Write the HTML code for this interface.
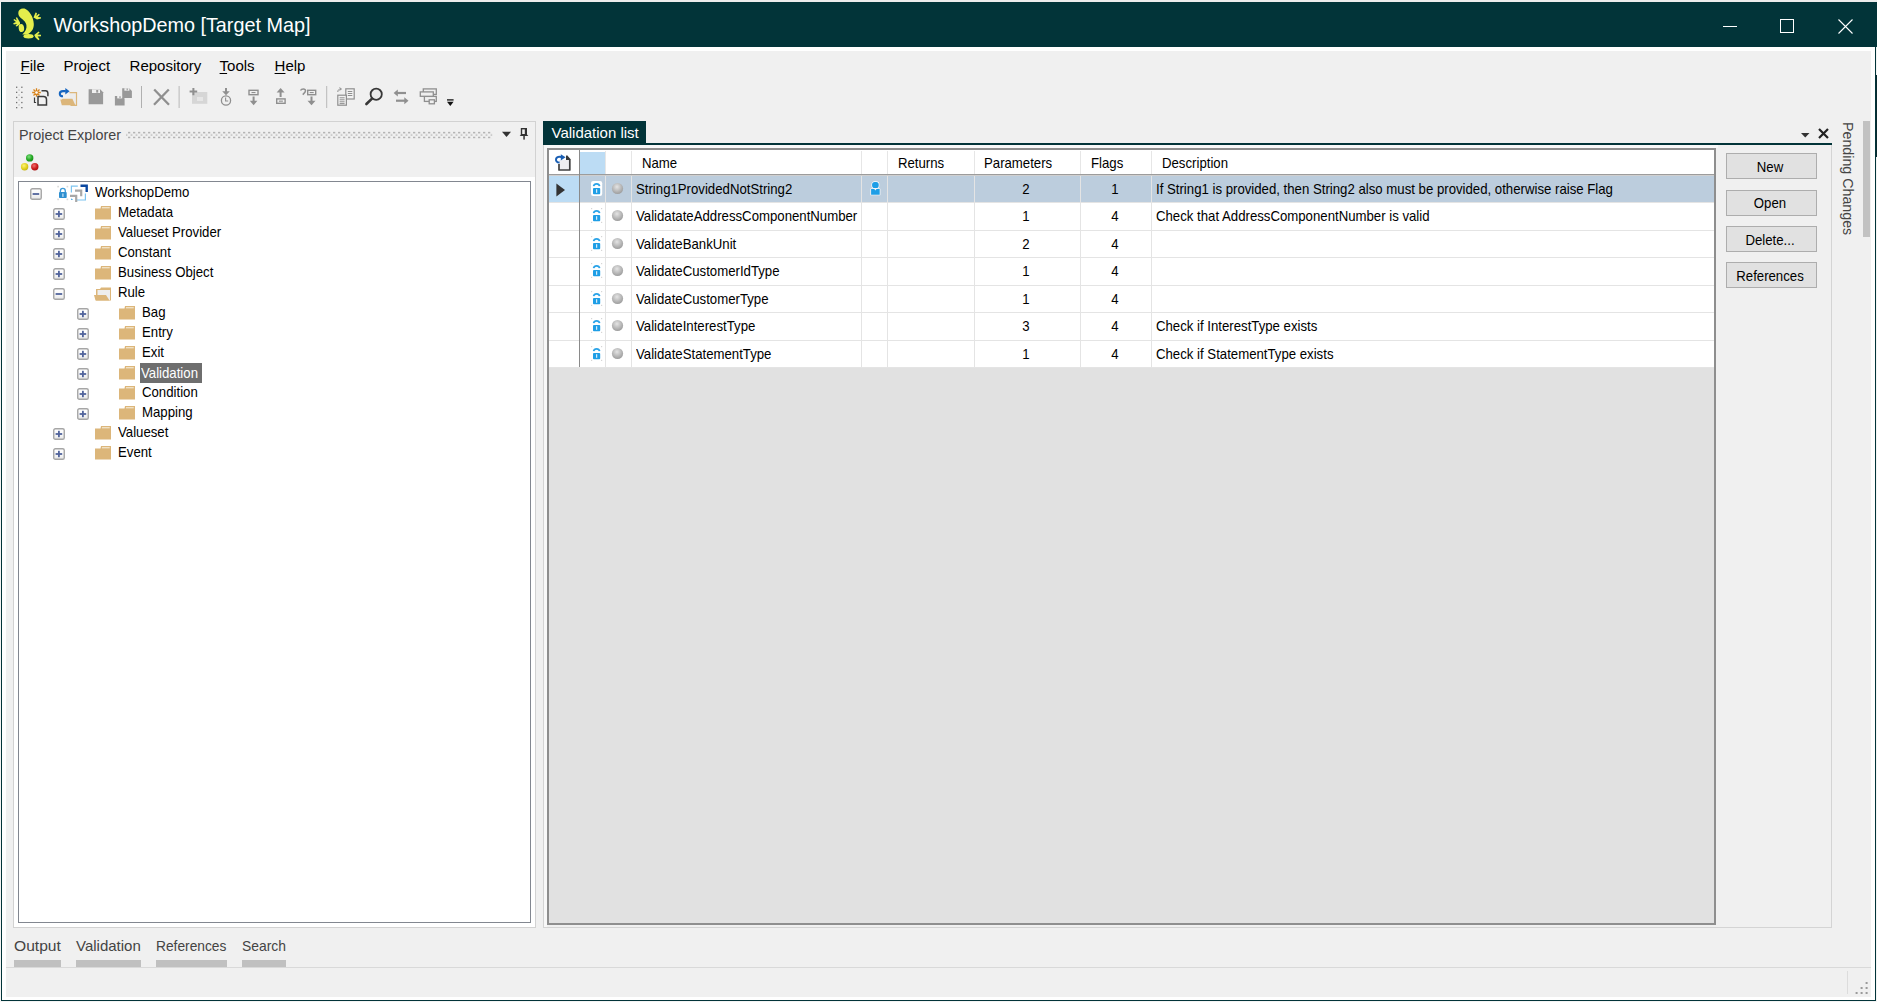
<!DOCTYPE html>
<html><head><meta charset="utf-8">
<style>
*{margin:0;padding:0;box-sizing:border-box}
html,body{width:1877px;height:1002px;overflow:hidden;background:#f4f4f4}
body{position:relative;font-family:"Liberation Sans",sans-serif}
.a{position:absolute}
.t{position:absolute;white-space:nowrap;line-height:1}
.u{text-decoration:underline;text-underline-offset:2px;text-decoration-thickness:1px}
.btn{position:absolute;left:1726px;width:91px;height:26px;background:#e1e1e1;border:1px solid #adadad;font-size:13px;text-align:center;line-height:24px;color:#000}
svg{position:absolute;overflow:visible}
</style></head><body>

<svg width="0" height="0" style="position:absolute"><defs><linearGradient id="pbg" x1="0" y1="0" x2="0" y2="1"><stop offset="0" stop-color="#ffffff"/><stop offset="0.5" stop-color="#f8f8f8"/><stop offset="1" stop-color="#e6e6e6"/></linearGradient></defs></svg>
<div class="a" style="left:0px;top:0px;width:1877px;height:2px;background:#ececec;"></div>
<div class="a" style="left:1px;top:2px;width:1875px;height:999px;background:#023439;"></div>
<div class="a" style="left:1876px;top:2px;width:1px;height:45px;background:#023439;"></div>
<div class="a" style="left:1876px;top:75px;width:1px;height:82px;background:#0a2a30;"></div>
<div class="a" style="left:2px;top:47px;width:1873px;height:953px;background:#ffffff;"></div>
<div class="a" style="left:6px;top:51px;width:1865px;height:946px;background:#f0f0f0;"></div>
<svg style="left:0;top:0" width="60" height="47" viewBox="0 0 60 47">
<g fill="#e4ee4c">
<path d="M18.3 13 C18.3 9.3 21.5 7.8 24.5 8.6 C29.5 10.3 33.6 17.5 33.8 24 C34 29 31.2 33 26.5 34.6 L22.3 34.6 C25.5 31.5 27 28.5 26.4 25 C25.8 21.3 22.5 19.5 20.3 17.4 C19 16.2 18.3 14.7 18.3 13 Z"/>
<ellipse cx="21.4" cy="28" rx="2.7" ry="4.1" transform="rotate(-8 21.4 28)"/>
<ellipse cx="28.5" cy="36.3" rx="5" ry="2.2"/>
<path d="M33.5 17.5 L35.5 12.5 L37 13 L36.3 16 L38.8 13.8 L39.8 14.8 L37.8 17 L41 17.2 L41 18.6 L37 19.6 Z"/>
<path d="M20 22.5 L17 17.2 L15.8 17.8 L16.8 20.5 L14.2 19 L13.4 20 L16 22 L13.2 23.2 L13.8 24.4 L17 24 L15.5 26 L16.8 26.6 L20 24.2 Z"/>
<path d="M34.2 35 L38.6 31.6 L39.6 32.6 L37.4 34.6 L41 34.8 L41 36.2 L37.6 36.4 L39.6 39.2 L38.4 40.2 L35.5 37.5 Z"/>
</g></svg>
<div class="t" style="left:53.5px;top:15.84px;font-size:19.8px;color:#ffffff;">WorkshopDemo [Target Map]</div>
<div class="a" style="left:1723px;top:26px;width:14px;height:1px;background:#ffffff;"></div>
<div class="a" style="left:1780px;top:19px;width:14px;height:14px;background:transparent;border:1px solid #ffffff"></div>
<svg style="left:1838px;top:19px" width="15" height="15" viewBox="0 0 15 15"><path d="M0.5 0.5 L14.5 14.5 M14.5 0.5 L0.5 14.5" stroke="#fff" stroke-width="1.1"/></svg>
<div class="t" style="left:20.6px;top:57.70px;font-size:15px;color:#000;"><span class="u">F</span>ile</div>
<div class="t" style="left:63.4px;top:57.70px;font-size:15px;color:#000;">Project</div>
<div class="t" style="left:129.6px;top:57.70px;font-size:15px;color:#000;">Repository</div>
<div class="t" style="left:219.6px;top:57.70px;font-size:15px;color:#000;"><span class="u">T</span>ools</div>
<div class="t" style="left:274.6px;top:57.70px;font-size:15px;color:#000;"><span class="u">H</span>elp</div>
<svg style="left:0;top:0" width="480" height="120" viewBox="0 0 480 120"><rect x="16.0" y="86.6" width="1.3" height="1.3" fill="#707070"/><rect x="21.2" y="86.6" width="1.3" height="1.3" fill="#707070"/><rect x="16.0" y="91.7" width="1.3" height="1.3" fill="#707070"/><rect x="21.2" y="91.7" width="1.3" height="1.3" fill="#707070"/><rect x="16.0" y="96.8" width="1.3" height="1.3" fill="#707070"/><rect x="21.2" y="96.8" width="1.3" height="1.3" fill="#707070"/><rect x="16.0" y="101.9" width="1.3" height="1.3" fill="#707070"/><rect x="21.2" y="101.9" width="1.3" height="1.3" fill="#707070"/><rect x="16.0" y="107.0" width="1.3" height="1.3" fill="#707070"/><rect x="21.2" y="107.0" width="1.3" height="1.3" fill="#707070"/><rect x="18.4" y="89.4" width="1.3" height="1.3" fill="#c0c0c0"/><rect x="18.4" y="94.4" width="1.3" height="1.3" fill="#c0c0c0"/><rect x="18.4" y="99.3" width="1.3" height="1.3" fill="#c0c0c0"/><rect x="18.4" y="104.3" width="1.3" height="1.3" fill="#c0c0c0"/><g fill="none" stroke="#3c3c3c" stroke-width="1.5"><path d="M38 96.5 h5.5 c2 0 3 1.2 3 3 v5.6 h-8.5 z" fill="#f2f2f2"/><path d="M41.5 90.8 h4 c1.6 0 2.4 1.2 2.4 2.6 v2.8"/><path d="M34.5 97.5 v5 h1.6" stroke-width="1.2"/></g><g stroke="#d8841c" stroke-width="1.3"><path d="M32.2 92.5 h8.6 M36.5 88.2 v8.6 M33.5 89.5 l6 6 M39.5 89.5 l-6 6"/></g><circle cx="36.5" cy="92.5" r="1.3" fill="#fff"/><path d="M69.5 92.6 h7 v12.8 h-6" fill="#ececec" stroke="#dcb67a" stroke-width="1.2"/><path d="M60.3 99.5 h1.5 l0.8 -0.8 h9.8 l3 6.6 h-13.6 z" fill="#dcb67a"/><path d="M63 96.3 c-2.6 0 -3.2 -1.5 -3.2 -2.6 c0 -1.6 1.2 -2.6 3.2 -2.6 h2.8" fill="none" stroke="#1565c0" stroke-width="2.1"/><path d="M65.3 87.9 l4.3 3.3 l-4.3 3.3 z" fill="#1565c0"/><path d="M88.6 89.3 h11.5 l3 3 v11.9 h-14.5 z" fill="#999"/><rect x="92" y="89.3" width="8" height="3.7" fill="#f0f0f0"/><rect x="96.2" y="90" width="2" height="2.6" fill="#999"/><path d="M114.9 95.9 h7 l2.7 2.7 v6.9 h-9.7 z" fill="#999"/><path d="M122.2 88.2 h7 l2.7 2.7 v7 h-9.7 z" fill="#999"/><rect x="117.2" y="95.9" width="5" height="2.5" fill="#f0f0f0"/><rect x="119.4" y="96.2" width="1.2" height="1.8" fill="#999"/><rect x="124.4" y="88.2" width="5" height="2.5" fill="#f0f0f0"/><rect x="126.6" y="88.5" width="1.2" height="1.8" fill="#999"/><rect x="141" y="86" width="1" height="22" fill="#b0b0b0"/><path d="M154.2 89.5 L169 104.8 M168.8 89.5 L154 104.8" stroke="#8f8f8f" stroke-width="2.3"/><rect x="178.6" y="86" width="1" height="22" fill="#b8b8b8"/><rect x="192" y="92" width="15.3" height="11.8" fill="#d6d6d6"/><path d="M197 97 h6 v4 h-6 z" fill="#e6e6e6"/><path d="M189.6 91.6 h7.6 M193.4 88 v7.2" stroke="#8f8f8f" stroke-width="2"/><path d="M226 88 v5.5" stroke="#8f8f8f" stroke-width="2"/><path d="M222.2 91.3 h7.6 l-3.8 3.9 z" fill="#8f8f8f"/><circle cx="226" cy="100.5" r="4.6" fill="none" stroke="#8f8f8f" stroke-width="1.3"/><path d="M225.6 97.6 v3.4 h2.6" fill="none" stroke="#8f8f8f" stroke-width="1.1"/><rect x="249" y="90.3" width="9" height="4.4" fill="none" stroke="#8f8f8f" stroke-width="1.4"/><rect x="251.5" y="92" width="4" height="1.1" fill="#8f8f8f"/><path d="M253.6 96.5 v5" stroke="#8f8f8f" stroke-width="2"/><path d="M249.8 100.8 h7.6 l-3.8 4.5 z" fill="#8f8f8f"/><rect x="276.7" y="98.9" width="8.4" height="4.4" fill="none" stroke="#8f8f8f" stroke-width="1.4"/><rect x="278.9" y="100.6" width="4" height="1.1" fill="#8f8f8f"/><path d="M280.6 91.5 v5.5" stroke="#8f8f8f" stroke-width="2"/><path d="M276.6 92.5 h8 l-4 -4.5 z" fill="#8f8f8f"/><rect x="307.7" y="90.3" width="8" height="4.4" fill="none" stroke="#8f8f8f" stroke-width="1.4"/><rect x="309.7" y="92" width="4" height="1.1" fill="#8f8f8f"/><path d="M311.5 96.5 v5" stroke="#8f8f8f" stroke-width="2"/><path d="M307.5 100.8 h8 l-4 4.5 z" fill="#8f8f8f"/><path d="M300.5 90.5 c1 -2 5 -2.3 5 0.3 c0 1.5 -1.5 2.5 -2.8 3.8" fill="none" stroke="#8f8f8f" stroke-width="1.5"/><rect x="326.2" y="86" width="1" height="22" fill="#b8b8b8"/><rect x="345.8" y="88.8" width="8.4" height="10.2" fill="#f2f2f2" stroke="#8f8f8f" stroke-width="1.2"/><rect x="337.8" y="95.2" width="8.6" height="10" fill="#f2f2f2" stroke="#8f8f8f" stroke-width="1.2"/><path d="M339.6 97.8 h5 M339.6 99.8 h5 M339.6 101.8 h5 M339.6 103.6 h5 M347.8 91.5 h4.5 M347.8 93.5 h4.5 M347.8 95.5 h4.5" stroke="#8f8f8f" stroke-width="1"/><path d="M337.8 92 c0 -2 1 -3 3 -3 M339.5 87.6 l2 1.4 l-2 1.4" fill="none" stroke="#8f8f8f" stroke-width="1"/><circle cx="376.2" cy="94.2" r="5.6" fill="#ececec" stroke="#383838" stroke-width="1.8"/><path d="M372 98.6 L366.4 104" stroke="#383838" stroke-width="2.6" stroke-linecap="round"/><path d="M397 93 h9" stroke="#8f8f8f" stroke-width="2.2"/><path d="M393.6 93 l4.2 -3.5 v7 z" fill="#8f8f8f"/><path d="M396 100.7 h9" stroke="#8f8f8f" stroke-width="2.2"/><path d="M408.5 100.7 l-4.2 -3.5 v7 z" fill="#8f8f8f"/><rect x="423.3" y="88.9" width="13" height="5.5" fill="none" stroke="#8f8f8f" stroke-width="1.3"/><rect x="424.4" y="96.4" width="11.9" height="5" fill="#f0f0f0" stroke="#8f8f8f" stroke-width="1.3"/><rect x="420.3" y="91.9" width="13" height="4.4" fill="#f0f0f0" stroke="#8f8f8f" stroke-width="1.3"/><rect x="429.2" y="99.8" width="5.2" height="4" fill="#f0f0f0" stroke="#8f8f8f" stroke-width="1.3"/><rect x="447" y="99.2" width="6.6" height="1.4" fill="#222"/><path d="M447 101.8 h6.6 l-3.3 4.1 z" fill="#111"/></svg>
<div class="a" style="left:13px;top:121px;width:523px;height:807px;background:transparent;border:1px solid #d2d2d2"></div>
<div class="t" style="left:19px;top:126.90px;font-size:15px;color:#444;transform-origin:0 0;transform:scaleX(0.955);">Project Explorer</div>
<svg style="left:0;top:0" width="540" height="150" viewBox="0 0 540 150"><defs><pattern id="gp" x="3.35" y="131.75" width="5" height="5" patternUnits="userSpaceOnUse"><rect x="0" y="0" width="1.5" height="1.5" fill="#8a8a8a"/><rect x="2.5" y="2.5" width="1.5" height="1.5" fill="#b4b4b4"/></pattern></defs><rect x="126" y="131.5" width="366.5" height="7" fill="url(#gp)"/></svg>
<svg style="left:0;top:0" width="540" height="180" viewBox="0 0 540 180"><path d="M502 131.8 h9 l-4.5 5.1 z" fill="#333"/><rect x="520.8" y="128" width="6.2" height="7" fill="#333"/><rect x="522.2" y="129.4" width="2.6" height="4.6" fill="#f0f0f0"/><path d="M521 134.4 h6 l1.3 1.6 h-8.6 z" fill="#333"/><rect x="523.3" y="136" width="1.5" height="3.6" fill="#333"/><defs><radialGradient id="tg" cx="0.4" cy="0.35" r="0.7"><stop offset="0" stop-color="#7ee07e"/><stop offset="0.6" stop-color="#25a825"/><stop offset="1" stop-color="#168a16"/></radialGradient><radialGradient id="ty" cx="0.4" cy="0.35" r="0.7"><stop offset="0" stop-color="#fff27a"/><stop offset="0.6" stop-color="#e2d21e"/><stop offset="1" stop-color="#c2b010"/></radialGradient><radialGradient id="tr" cx="0.4" cy="0.35" r="0.7"><stop offset="0" stop-color="#f07070"/><stop offset="0.6" stop-color="#cc1c1c"/><stop offset="1" stop-color="#a41010"/></radialGradient></defs><circle cx="29.7" cy="157.9" r="3.7" fill="url(#tg)"/><circle cx="24.6" cy="166.8" r="3.7" fill="url(#ty)"/><circle cx="34.8" cy="166.8" r="3.7" fill="url(#tr)"/></svg>
<div class="a" style="left:14px;top:177px;width:521px;height:750px;background:#ffffff;"></div>
<div class="a" style="left:18px;top:181px;width:513px;height:742px;background:#ffffff;border:1px solid #828790"></div>
<svg style="left:29.8px;top:188.0px" width="12" height="12" viewBox="0 0 12 12"><rect x="0.75" y="0.75" width="10.5" height="10.5" rx="1.6" fill="url(#pbg)" stroke="#a6a6a6" stroke-width="1.4"/><rect x="2.6" y="5.1" width="6.6" height="1.8" fill="#52649c"/></svg>
<svg style="left:52px;top:183px" width="40" height="20" viewBox="0 0 40 20"><g fill="#d8d8d8"><rect x="5.3" y="2.8" width="1.6" height="1.6"/><rect x="14.6" y="2.8" width="1.6" height="1.6"/><rect x="5.3" y="15.6" width="1.6" height="1.6"/><rect x="14.6" y="15.6" width="1.6" height="1.6"/></g><rect x="7" y="9" width="7.7" height="6.1" rx="0.8" fill="#2e8fd0"/><path d="M8.4 9.2 v-1.3 a2.45 2.45 0 0 1 4.9 0 v1.3" fill="none" stroke="#3d9ad8" stroke-width="1.3"/><rect x="10.3" y="10.5" width="1.2" height="3.4" fill="#cfe6f7"/><path d="M19.4 9.6 v-6.4 h6.4 M33.4 10.6 v6.4 h-8.4" fill="none" stroke="#7cc4f0" stroke-width="1.2"/><path d="M19.2 15.2 v1.8 h1.8 z" fill="#2aa0ea"/><path d="M28.5 2.8 h6.2 v6.2" fill="none" stroke="#0b47a0" stroke-width="2.4"/><path d="M23 7.6 h6.2 v5.6" fill="none" stroke="#a8a8a8" stroke-width="2.2"/><path d="M18 12.9 h6.2 v6" fill="none" stroke="#a8a8a8" stroke-width="2.2"/></svg>
<div class="t" style="left:94.9px;top:184.53px;font-size:14.5px;color:#000;transform-origin:0 0;transform:scaleX(0.91);">WorkshopDemo</div>
<svg style="left:53.4px;top:208.0px" width="12" height="12" viewBox="0 0 12 12"><rect x="0.75" y="0.75" width="10.5" height="10.5" rx="1.6" fill="url(#pbg)" stroke="#a6a6a6" stroke-width="1.4"/><rect x="2.6" y="5.1" width="6.6" height="1.8" fill="#52649c"/><rect x="5" y="2.8" width="1.8" height="6.4" fill="#52649c"/></svg>
<svg style="left:95px;top:206px" width="16" height="14" viewBox="0 0 16 14"><path d="M0 2.5 h5.5 l0.5 -2.5 h10 v13.5 h-16 z" fill="#dcb67a"/><rect x="7" y="1.2" width="7.7" height="1.1" fill="#f6ecd8"/></svg>
<div class="t" style="left:118.4px;top:204.53px;font-size:14.5px;color:#000;transform-origin:0 0;transform:scaleX(0.91);">Metadata</div>
<svg style="left:53.4px;top:228.0px" width="12" height="12" viewBox="0 0 12 12"><rect x="0.75" y="0.75" width="10.5" height="10.5" rx="1.6" fill="url(#pbg)" stroke="#a6a6a6" stroke-width="1.4"/><rect x="2.6" y="5.1" width="6.6" height="1.8" fill="#52649c"/><rect x="5" y="2.8" width="1.8" height="6.4" fill="#52649c"/></svg>
<svg style="left:95px;top:226px" width="16" height="14" viewBox="0 0 16 14"><path d="M0 2.5 h5.5 l0.5 -2.5 h10 v13.5 h-16 z" fill="#dcb67a"/><rect x="7" y="1.2" width="7.7" height="1.1" fill="#f6ecd8"/></svg>
<div class="t" style="left:118.4px;top:224.53px;font-size:14.5px;color:#000;transform-origin:0 0;transform:scaleX(0.91);">Valueset Provider</div>
<svg style="left:53.4px;top:248.0px" width="12" height="12" viewBox="0 0 12 12"><rect x="0.75" y="0.75" width="10.5" height="10.5" rx="1.6" fill="url(#pbg)" stroke="#a6a6a6" stroke-width="1.4"/><rect x="2.6" y="5.1" width="6.6" height="1.8" fill="#52649c"/><rect x="5" y="2.8" width="1.8" height="6.4" fill="#52649c"/></svg>
<svg style="left:95px;top:246px" width="16" height="14" viewBox="0 0 16 14"><path d="M0 2.5 h5.5 l0.5 -2.5 h10 v13.5 h-16 z" fill="#dcb67a"/><rect x="7" y="1.2" width="7.7" height="1.1" fill="#f6ecd8"/></svg>
<div class="t" style="left:118.4px;top:244.53px;font-size:14.5px;color:#000;transform-origin:0 0;transform:scaleX(0.91);">Constant</div>
<svg style="left:53.4px;top:268.0px" width="12" height="12" viewBox="0 0 12 12"><rect x="0.75" y="0.75" width="10.5" height="10.5" rx="1.6" fill="url(#pbg)" stroke="#a6a6a6" stroke-width="1.4"/><rect x="2.6" y="5.1" width="6.6" height="1.8" fill="#52649c"/><rect x="5" y="2.8" width="1.8" height="6.4" fill="#52649c"/></svg>
<svg style="left:95px;top:266px" width="16" height="14" viewBox="0 0 16 14"><path d="M0 2.5 h5.5 l0.5 -2.5 h10 v13.5 h-16 z" fill="#dcb67a"/><rect x="7" y="1.2" width="7.7" height="1.1" fill="#f6ecd8"/></svg>
<div class="t" style="left:118.4px;top:264.53px;font-size:14.5px;color:#000;transform-origin:0 0;transform:scaleX(0.91);">Business Object</div>
<svg style="left:53.4px;top:288.0px" width="12" height="12" viewBox="0 0 12 12"><rect x="0.75" y="0.75" width="10.5" height="10.5" rx="1.6" fill="url(#pbg)" stroke="#a6a6a6" stroke-width="1.4"/><rect x="2.6" y="5.1" width="6.6" height="1.8" fill="#52649c"/></svg>
<svg style="left:93.5px;top:286px" width="18" height="15" viewBox="0 0 18 15"><path d="M2 3 h4 l1 -1.5 h10 v13 h-15 z" fill="#dcb67a"/><path d="M3.5 4 h12.5 v10 h-12.5 z" fill="#eeeeee"/><path d="M0 9 h12 l3.5 5.5 h-14 z" fill="#dcb67a"/></svg>
<div class="t" style="left:118.4px;top:284.53px;font-size:14.5px;color:#000;transform-origin:0 0;transform:scaleX(0.91);">Rule</div>
<svg style="left:77.0px;top:308.0px" width="12" height="12" viewBox="0 0 12 12"><rect x="0.75" y="0.75" width="10.5" height="10.5" rx="1.6" fill="url(#pbg)" stroke="#a6a6a6" stroke-width="1.4"/><rect x="2.6" y="5.1" width="6.6" height="1.8" fill="#52649c"/><rect x="5" y="2.8" width="1.8" height="6.4" fill="#52649c"/></svg>
<svg style="left:118.5px;top:306px" width="16" height="14" viewBox="0 0 16 14"><path d="M0 2.5 h5.5 l0.5 -2.5 h10 v13.5 h-16 z" fill="#dcb67a"/><rect x="7" y="1.2" width="7.7" height="1.1" fill="#f6ecd8"/></svg>
<div class="t" style="left:142.2px;top:304.53px;font-size:14.5px;color:#000;transform-origin:0 0;transform:scaleX(0.91);">Bag</div>
<svg style="left:77.0px;top:328.0px" width="12" height="12" viewBox="0 0 12 12"><rect x="0.75" y="0.75" width="10.5" height="10.5" rx="1.6" fill="url(#pbg)" stroke="#a6a6a6" stroke-width="1.4"/><rect x="2.6" y="5.1" width="6.6" height="1.8" fill="#52649c"/><rect x="5" y="2.8" width="1.8" height="6.4" fill="#52649c"/></svg>
<svg style="left:118.5px;top:326px" width="16" height="14" viewBox="0 0 16 14"><path d="M0 2.5 h5.5 l0.5 -2.5 h10 v13.5 h-16 z" fill="#dcb67a"/><rect x="7" y="1.2" width="7.7" height="1.1" fill="#f6ecd8"/></svg>
<div class="t" style="left:142.2px;top:324.53px;font-size:14.5px;color:#000;transform-origin:0 0;transform:scaleX(0.91);">Entry</div>
<svg style="left:77.0px;top:348.0px" width="12" height="12" viewBox="0 0 12 12"><rect x="0.75" y="0.75" width="10.5" height="10.5" rx="1.6" fill="url(#pbg)" stroke="#a6a6a6" stroke-width="1.4"/><rect x="2.6" y="5.1" width="6.6" height="1.8" fill="#52649c"/><rect x="5" y="2.8" width="1.8" height="6.4" fill="#52649c"/></svg>
<svg style="left:118.5px;top:346px" width="16" height="14" viewBox="0 0 16 14"><path d="M0 2.5 h5.5 l0.5 -2.5 h10 v13.5 h-16 z" fill="#dcb67a"/><rect x="7" y="1.2" width="7.7" height="1.1" fill="#f6ecd8"/></svg>
<div class="t" style="left:142.2px;top:344.53px;font-size:14.5px;color:#000;transform-origin:0 0;transform:scaleX(0.91);">Exit</div>
<svg style="left:77.0px;top:368.0px" width="12" height="12" viewBox="0 0 12 12"><rect x="0.75" y="0.75" width="10.5" height="10.5" rx="1.6" fill="url(#pbg)" stroke="#a6a6a6" stroke-width="1.4"/><rect x="2.6" y="5.1" width="6.6" height="1.8" fill="#52649c"/><rect x="5" y="2.8" width="1.8" height="6.4" fill="#52649c"/></svg>
<svg style="left:118.5px;top:366px" width="16" height="14" viewBox="0 0 16 14"><path d="M0 2.5 h5.5 l0.5 -2.5 h10 v13.5 h-16 z" fill="#dcb67a"/><rect x="7" y="1.2" width="7.7" height="1.1" fill="#f6ecd8"/></svg>
<div class="a" style="left:140px;top:363px;width:62px;height:20px;background:#6e6e6e;"></div>
<div class="t" style="left:141.2px;top:366.33px;font-size:14.5px;color:#ffffff;transform-origin:0 0;transform:scaleX(0.91);">Validation</div>
<svg style="left:77.0px;top:388.0px" width="12" height="12" viewBox="0 0 12 12"><rect x="0.75" y="0.75" width="10.5" height="10.5" rx="1.6" fill="url(#pbg)" stroke="#a6a6a6" stroke-width="1.4"/><rect x="2.6" y="5.1" width="6.6" height="1.8" fill="#52649c"/><rect x="5" y="2.8" width="1.8" height="6.4" fill="#52649c"/></svg>
<svg style="left:118.5px;top:386px" width="16" height="14" viewBox="0 0 16 14"><path d="M0 2.5 h5.5 l0.5 -2.5 h10 v13.5 h-16 z" fill="#dcb67a"/><rect x="7" y="1.2" width="7.7" height="1.1" fill="#f6ecd8"/></svg>
<div class="t" style="left:142.2px;top:384.53px;font-size:14.5px;color:#000;transform-origin:0 0;transform:scaleX(0.91);">Condition</div>
<svg style="left:77.0px;top:408.0px" width="12" height="12" viewBox="0 0 12 12"><rect x="0.75" y="0.75" width="10.5" height="10.5" rx="1.6" fill="url(#pbg)" stroke="#a6a6a6" stroke-width="1.4"/><rect x="2.6" y="5.1" width="6.6" height="1.8" fill="#52649c"/><rect x="5" y="2.8" width="1.8" height="6.4" fill="#52649c"/></svg>
<svg style="left:118.5px;top:406px" width="16" height="14" viewBox="0 0 16 14"><path d="M0 2.5 h5.5 l0.5 -2.5 h10 v13.5 h-16 z" fill="#dcb67a"/><rect x="7" y="1.2" width="7.7" height="1.1" fill="#f6ecd8"/></svg>
<div class="t" style="left:142.2px;top:404.53px;font-size:14.5px;color:#000;transform-origin:0 0;transform:scaleX(0.91);">Mapping</div>
<svg style="left:53.4px;top:428.0px" width="12" height="12" viewBox="0 0 12 12"><rect x="0.75" y="0.75" width="10.5" height="10.5" rx="1.6" fill="url(#pbg)" stroke="#a6a6a6" stroke-width="1.4"/><rect x="2.6" y="5.1" width="6.6" height="1.8" fill="#52649c"/><rect x="5" y="2.8" width="1.8" height="6.4" fill="#52649c"/></svg>
<svg style="left:95px;top:426px" width="16" height="14" viewBox="0 0 16 14"><path d="M0 2.5 h5.5 l0.5 -2.5 h10 v13.5 h-16 z" fill="#dcb67a"/><rect x="7" y="1.2" width="7.7" height="1.1" fill="#f6ecd8"/></svg>
<div class="t" style="left:118.4px;top:424.53px;font-size:14.5px;color:#000;transform-origin:0 0;transform:scaleX(0.91);">Valueset</div>
<svg style="left:53.4px;top:448.0px" width="12" height="12" viewBox="0 0 12 12"><rect x="0.75" y="0.75" width="10.5" height="10.5" rx="1.6" fill="url(#pbg)" stroke="#a6a6a6" stroke-width="1.4"/><rect x="2.6" y="5.1" width="6.6" height="1.8" fill="#52649c"/><rect x="5" y="2.8" width="1.8" height="6.4" fill="#52649c"/></svg>
<svg style="left:95px;top:446px" width="16" height="14" viewBox="0 0 16 14"><path d="M0 2.5 h5.5 l0.5 -2.5 h10 v13.5 h-16 z" fill="#dcb67a"/><rect x="7" y="1.2" width="7.7" height="1.1" fill="#f6ecd8"/></svg>
<div class="t" style="left:118.4px;top:444.53px;font-size:14.5px;color:#000;transform-origin:0 0;transform:scaleX(0.91);">Event</div>
<div class="a" style="left:543px;top:121px;width:103px;height:24px;background:#023439;"></div>
<div class="t" style="left:551.5px;top:125.10px;font-size:15px;color:#ffffff;">Validation list</div>
<div class="a" style="left:543px;top:143px;width:1289px;height:2px;background:#023439;"></div>
<div class="a" style="left:543px;top:145px;width:1289px;height:783px;background:transparent;border:1px solid #d4d4d4;border-top:none"></div>
<svg style="left:0;top:0" width="1840" height="150" viewBox="0 0 1840 150"><path d="M1801 133 h8.5 l-4.25 4.5 z" fill="#333"/><path d="M1819 129 L1828 138 M1828 129 L1819 138" stroke="#222" stroke-width="2.2"/></svg>
<div class="a" style="left:544px;top:145px;width:1174px;height:3px;background:#f8f8f8;"></div>
<div class="a" style="left:544px;top:145px;width:3px;height:782px;background:#f8f8f8;"></div>
<div class="a" style="left:547px;top:148px;width:1169px;height:776.5px;background:#e1e1e1;border:2px solid #8e8e8e"></div>
<div class="a" style="left:549px;top:150px;width:1165px;height:25px;background:#ffffff;"></div>
<div class="a" style="left:580px;top:152px;width:26px;height:22px;background:#bcdcf4;"></div>
<div class="a" style="left:549px;top:176px;width:1165px;height:191px;background:#ffffff;"></div>
<div class="a" style="left:549px;top:176px;width:30px;height:26px;background:#bcdcf4;"></div>
<div class="a" style="left:580px;top:176px;width:1134px;height:26px;background:#bccddd;"></div>
<div class="a" style="left:549px;top:202px;width:1165px;height:1px;background:#e4e4e4;"></div>
<div class="a" style="left:549px;top:230px;width:1165px;height:1px;background:#e4e4e4;"></div>
<div class="a" style="left:549px;top:257px;width:1165px;height:1px;background:#e4e4e4;"></div>
<div class="a" style="left:549px;top:285px;width:1165px;height:1px;background:#e4e4e4;"></div>
<div class="a" style="left:549px;top:312px;width:1165px;height:1px;background:#e4e4e4;"></div>
<div class="a" style="left:549px;top:340px;width:1165px;height:1px;background:#e4e4e4;"></div>
<div class="a" style="left:549px;top:367px;width:1165px;height:1px;background:#e4e4e4;"></div>
<div class="a" style="left:549px;top:174px;width:1165px;height:1px;background:#9c9c9c;"></div>
<div class="a" style="left:549px;top:175px;width:1165px;height:1px;background:#cfcfcf;"></div>
<div class="a" style="left:579px;top:150px;width:1px;height:217px;background:#8a8a8a;"></div>
<div class="a" style="left:605px;top:151px;width:1px;height:23px;background:#e6e6e6;"></div>
<div class="a" style="left:605px;top:176px;width:1px;height:191px;background:#e4e4e4;"></div>
<div class="a" style="left:631px;top:151px;width:1px;height:23px;background:#e6e6e6;"></div>
<div class="a" style="left:631px;top:176px;width:1px;height:191px;background:#e4e4e4;"></div>
<div class="a" style="left:861px;top:151px;width:1px;height:23px;background:#e6e6e6;"></div>
<div class="a" style="left:861px;top:176px;width:1px;height:191px;background:#e4e4e4;"></div>
<div class="a" style="left:887px;top:151px;width:1px;height:23px;background:#e6e6e6;"></div>
<div class="a" style="left:887px;top:176px;width:1px;height:191px;background:#e4e4e4;"></div>
<div class="a" style="left:974px;top:151px;width:1px;height:23px;background:#e6e6e6;"></div>
<div class="a" style="left:974px;top:176px;width:1px;height:191px;background:#e4e4e4;"></div>
<div class="a" style="left:1080px;top:151px;width:1px;height:23px;background:#e6e6e6;"></div>
<div class="a" style="left:1080px;top:176px;width:1px;height:191px;background:#e4e4e4;"></div>
<div class="a" style="left:1151px;top:151px;width:1px;height:23px;background:#e6e6e6;"></div>
<div class="a" style="left:1151px;top:176px;width:1px;height:191px;background:#e4e4e4;"></div>
<div class="t" style="left:641.7px;top:155.53px;font-size:14.5px;color:#000;transform-origin:0 0;transform:scaleX(0.91);">Name</div>
<div class="t" style="left:897.5px;top:155.53px;font-size:14.5px;color:#000;transform-origin:0 0;transform:scaleX(0.91);">Returns</div>
<div class="t" style="left:984px;top:155.53px;font-size:14.5px;color:#000;transform-origin:0 0;transform:scaleX(0.91);">Parameters</div>
<div class="t" style="left:1090.8px;top:155.53px;font-size:14.5px;color:#000;transform-origin:0 0;transform:scaleX(0.91);">Flags</div>
<div class="t" style="left:1161.8px;top:155.53px;font-size:14.5px;color:#000;transform-origin:0 0;transform:scaleX(0.91);">Description</div>
<svg style="left:553px;top:150px" width="24" height="24" viewBox="0 0 24 24"><rect x="6.5" y="10" width="9.5" height="9.5" fill="#eeeef0"/><path d="M6 14 V20 H16.8 V9.5 L13.5 5.8" fill="none" stroke="#404040" stroke-width="1.7" stroke-linejoin="round"/><path d="M13 5.3 L17.7 10 H13 Z" fill="#383838"/><path d="M6.6 12.6 C3.6 12.6 2.6 10.6 3.1 8.8 C3.8 6.8 6 6.5 8.5 7" fill="none" stroke="#1a5fb4" stroke-width="2"/><path d="M7.8 4.2 L12.6 7.3 L7.8 10.4 Z" fill="#1a5fb4"/></svg>
<svg style="left:588px;top:176px" width="16" height="26" viewBox="0 0 16 26"><rect x="3" y="5" width="11.2" height="15" rx="2.2" fill="#ffffff"/><rect x="5" y="12" width="7.2" height="6.2" rx="0.9" fill="#1e9ee6"/><path d="M5.6 10.2 C6.2 7 11 7 11.6 10.2" fill="none" stroke="#2aa3e8" stroke-width="1.7"/><rect x="8.1" y="13.2" width="1.1" height="3.6" fill="#e8f4fc"/></svg>
<svg style="left:611.3px;top:181.7px" width="13" height="13" viewBox="0 0 13 13"><defs><radialGradient id="gc" cx="0.45" cy="0.35" r="0.65"><stop offset="0" stop-color="#e4e4e4"/><stop offset="1" stop-color="#9c9c9c"/></radialGradient></defs><circle cx="6.5" cy="6.5" r="5.6" fill="url(#gc)"/></svg>
<div class="t" style="left:636px;top:181.93px;font-size:14.5px;color:#000;transform-origin:0 0;transform:scaleX(0.91);">String1ProvidedNotString2</div>
<div class="t" style="left:985.8px;width:80px;text-align:center;top:181.93px;font-size:14.5px;transform:scaleX(0.91)">2</div>
<div class="t" style="left:1074.5px;width:80px;text-align:center;top:181.93px;font-size:14.5px;transform:scaleX(0.91)">1</div>
<div class="t" style="left:1156px;top:181.93px;font-size:14.5px;color:#000;transform-origin:0 0;transform:scaleX(0.91);">If String1 is provided, then String2 also must be provided, otherwise raise Flag</div>
<svg style="left:588px;top:203px" width="16" height="26" viewBox="0 0 16 26"><g fill="#d6d6d6"><rect x="3" y="5" width="1.2" height="1.2"/><rect x="13" y="5" width="1.2" height="1.2"/><rect x="3" y="18.8" width="1.2" height="1.2"/><rect x="13" y="18.8" width="1.2" height="1.2"/></g><rect x="5" y="12" width="7.2" height="6.2" rx="0.9" fill="#1e9ee6"/><path d="M5.6 10.2 C6.2 7 11 7 11.6 10.2" fill="none" stroke="#2aa3e8" stroke-width="1.7"/><rect x="8.1" y="13.2" width="1.1" height="3.6" fill="#e8f4fc"/></svg>
<svg style="left:611.3px;top:208.7px" width="13" height="13" viewBox="0 0 13 13"><defs><radialGradient id="gc" cx="0.45" cy="0.35" r="0.65"><stop offset="0" stop-color="#e4e4e4"/><stop offset="1" stop-color="#9c9c9c"/></radialGradient></defs><circle cx="6.5" cy="6.5" r="5.6" fill="url(#gc)"/></svg>
<div class="t" style="left:636px;top:208.93px;font-size:14.5px;color:#000;transform-origin:0 0;transform:scaleX(0.91);">ValidatateAddressComponentNumber</div>
<div class="t" style="left:985.8px;width:80px;text-align:center;top:208.93px;font-size:14.5px;transform:scaleX(0.91)">1</div>
<div class="t" style="left:1074.5px;width:80px;text-align:center;top:208.93px;font-size:14.5px;transform:scaleX(0.91)">4</div>
<div class="t" style="left:1156px;top:208.93px;font-size:14.5px;color:#000;transform-origin:0 0;transform:scaleX(0.91);">Check that AddressComponentNumber is valid</div>
<svg style="left:588px;top:231px" width="16" height="26" viewBox="0 0 16 26"><g fill="#d6d6d6"><rect x="3" y="5" width="1.2" height="1.2"/><rect x="13" y="5" width="1.2" height="1.2"/><rect x="3" y="18.8" width="1.2" height="1.2"/><rect x="13" y="18.8" width="1.2" height="1.2"/></g><rect x="5" y="12" width="7.2" height="6.2" rx="0.9" fill="#1e9ee6"/><path d="M5.6 10.2 C6.2 7 11 7 11.6 10.2" fill="none" stroke="#2aa3e8" stroke-width="1.7"/><rect x="8.1" y="13.2" width="1.1" height="3.6" fill="#e8f4fc"/></svg>
<svg style="left:611.3px;top:236.7px" width="13" height="13" viewBox="0 0 13 13"><defs><radialGradient id="gc" cx="0.45" cy="0.35" r="0.65"><stop offset="0" stop-color="#e4e4e4"/><stop offset="1" stop-color="#9c9c9c"/></radialGradient></defs><circle cx="6.5" cy="6.5" r="5.6" fill="url(#gc)"/></svg>
<div class="t" style="left:636px;top:236.93px;font-size:14.5px;color:#000;transform-origin:0 0;transform:scaleX(0.91);">ValidateBankUnit</div>
<div class="t" style="left:985.8px;width:80px;text-align:center;top:236.93px;font-size:14.5px;transform:scaleX(0.91)">2</div>
<div class="t" style="left:1074.5px;width:80px;text-align:center;top:236.93px;font-size:14.5px;transform:scaleX(0.91)">4</div>
<svg style="left:588px;top:258px" width="16" height="26" viewBox="0 0 16 26"><g fill="#d6d6d6"><rect x="3" y="5" width="1.2" height="1.2"/><rect x="13" y="5" width="1.2" height="1.2"/><rect x="3" y="18.8" width="1.2" height="1.2"/><rect x="13" y="18.8" width="1.2" height="1.2"/></g><rect x="5" y="12" width="7.2" height="6.2" rx="0.9" fill="#1e9ee6"/><path d="M5.6 10.2 C6.2 7 11 7 11.6 10.2" fill="none" stroke="#2aa3e8" stroke-width="1.7"/><rect x="8.1" y="13.2" width="1.1" height="3.6" fill="#e8f4fc"/></svg>
<svg style="left:611.3px;top:263.7px" width="13" height="13" viewBox="0 0 13 13"><defs><radialGradient id="gc" cx="0.45" cy="0.35" r="0.65"><stop offset="0" stop-color="#e4e4e4"/><stop offset="1" stop-color="#9c9c9c"/></radialGradient></defs><circle cx="6.5" cy="6.5" r="5.6" fill="url(#gc)"/></svg>
<div class="t" style="left:636px;top:263.93px;font-size:14.5px;color:#000;transform-origin:0 0;transform:scaleX(0.91);">ValidateCustomerIdType</div>
<div class="t" style="left:985.8px;width:80px;text-align:center;top:263.93px;font-size:14.5px;transform:scaleX(0.91)">1</div>
<div class="t" style="left:1074.5px;width:80px;text-align:center;top:263.93px;font-size:14.5px;transform:scaleX(0.91)">4</div>
<svg style="left:588px;top:286px" width="16" height="26" viewBox="0 0 16 26"><g fill="#d6d6d6"><rect x="3" y="5" width="1.2" height="1.2"/><rect x="13" y="5" width="1.2" height="1.2"/><rect x="3" y="18.8" width="1.2" height="1.2"/><rect x="13" y="18.8" width="1.2" height="1.2"/></g><rect x="5" y="12" width="7.2" height="6.2" rx="0.9" fill="#1e9ee6"/><path d="M5.6 10.2 C6.2 7 11 7 11.6 10.2" fill="none" stroke="#2aa3e8" stroke-width="1.7"/><rect x="8.1" y="13.2" width="1.1" height="3.6" fill="#e8f4fc"/></svg>
<svg style="left:611.3px;top:291.7px" width="13" height="13" viewBox="0 0 13 13"><defs><radialGradient id="gc" cx="0.45" cy="0.35" r="0.65"><stop offset="0" stop-color="#e4e4e4"/><stop offset="1" stop-color="#9c9c9c"/></radialGradient></defs><circle cx="6.5" cy="6.5" r="5.6" fill="url(#gc)"/></svg>
<div class="t" style="left:636px;top:291.93px;font-size:14.5px;color:#000;transform-origin:0 0;transform:scaleX(0.91);">ValidateCustomerType</div>
<div class="t" style="left:985.8px;width:80px;text-align:center;top:291.93px;font-size:14.5px;transform:scaleX(0.91)">1</div>
<div class="t" style="left:1074.5px;width:80px;text-align:center;top:291.93px;font-size:14.5px;transform:scaleX(0.91)">4</div>
<svg style="left:588px;top:313px" width="16" height="26" viewBox="0 0 16 26"><g fill="#d6d6d6"><rect x="3" y="5" width="1.2" height="1.2"/><rect x="13" y="5" width="1.2" height="1.2"/><rect x="3" y="18.8" width="1.2" height="1.2"/><rect x="13" y="18.8" width="1.2" height="1.2"/></g><rect x="5" y="12" width="7.2" height="6.2" rx="0.9" fill="#1e9ee6"/><path d="M5.6 10.2 C6.2 7 11 7 11.6 10.2" fill="none" stroke="#2aa3e8" stroke-width="1.7"/><rect x="8.1" y="13.2" width="1.1" height="3.6" fill="#e8f4fc"/></svg>
<svg style="left:611.3px;top:318.7px" width="13" height="13" viewBox="0 0 13 13"><defs><radialGradient id="gc" cx="0.45" cy="0.35" r="0.65"><stop offset="0" stop-color="#e4e4e4"/><stop offset="1" stop-color="#9c9c9c"/></radialGradient></defs><circle cx="6.5" cy="6.5" r="5.6" fill="url(#gc)"/></svg>
<div class="t" style="left:636px;top:318.93px;font-size:14.5px;color:#000;transform-origin:0 0;transform:scaleX(0.91);">ValidateInterestType</div>
<div class="t" style="left:985.8px;width:80px;text-align:center;top:318.93px;font-size:14.5px;transform:scaleX(0.91)">3</div>
<div class="t" style="left:1074.5px;width:80px;text-align:center;top:318.93px;font-size:14.5px;transform:scaleX(0.91)">4</div>
<div class="t" style="left:1156px;top:318.93px;font-size:14.5px;color:#000;transform-origin:0 0;transform:scaleX(0.91);">Check if InterestType exists</div>
<svg style="left:588px;top:341px" width="16" height="26" viewBox="0 0 16 26"><g fill="#d6d6d6"><rect x="3" y="5" width="1.2" height="1.2"/><rect x="13" y="5" width="1.2" height="1.2"/><rect x="3" y="18.8" width="1.2" height="1.2"/><rect x="13" y="18.8" width="1.2" height="1.2"/></g><rect x="5" y="12" width="7.2" height="6.2" rx="0.9" fill="#1e9ee6"/><path d="M5.6 10.2 C6.2 7 11 7 11.6 10.2" fill="none" stroke="#2aa3e8" stroke-width="1.7"/><rect x="8.1" y="13.2" width="1.1" height="3.6" fill="#e8f4fc"/></svg>
<svg style="left:611.3px;top:346.7px" width="13" height="13" viewBox="0 0 13 13"><defs><radialGradient id="gc" cx="0.45" cy="0.35" r="0.65"><stop offset="0" stop-color="#e4e4e4"/><stop offset="1" stop-color="#9c9c9c"/></radialGradient></defs><circle cx="6.5" cy="6.5" r="5.6" fill="url(#gc)"/></svg>
<div class="t" style="left:636px;top:346.93px;font-size:14.5px;color:#000;transform-origin:0 0;transform:scaleX(0.91);">ValidateStatementType</div>
<div class="t" style="left:985.8px;width:80px;text-align:center;top:346.93px;font-size:14.5px;transform:scaleX(0.91)">1</div>
<div class="t" style="left:1074.5px;width:80px;text-align:center;top:346.93px;font-size:14.5px;transform:scaleX(0.91)">4</div>
<div class="t" style="left:1156px;top:346.93px;font-size:14.5px;color:#000;transform-origin:0 0;transform:scaleX(0.91);">Check if StatementType exists</div>
<svg style="left:555px;top:182px" width="12" height="16" viewBox="0 0 12 16"><path d="M1.4 1.6 L10 8.1 L1.4 14.6 z" fill="#333"/></svg>
<svg style="left:866px;top:178px" width="18" height="20" viewBox="0 0 18 20"><g fill="#1e9ee6" stroke="#ffffff" stroke-width="1.3" paint-order="stroke" stroke-linejoin="round"><rect x="6.1" y="3.9" width="6.6" height="6.2" rx="2.6"/><path d="M5.1 11.1 h3.2 l1.1 1.5 l1.1 -1.5 h3.2 v5.6 h-8.6 z"/></g></svg>
<div class="btn" style="top:153px"></div>
<div class="t" style="left:1710.2px;width:120px;text-align:center;top:159.63px;font-size:14.5px;transform:scaleX(0.91)">New</div>
<div class="btn" style="top:189.5px"></div>
<div class="t" style="left:1710.2px;width:120px;text-align:center;top:196.13px;font-size:14.5px;transform:scaleX(0.91)">Open</div>
<div class="btn" style="top:226px"></div>
<div class="t" style="left:1710.2px;width:120px;text-align:center;top:232.63px;font-size:14.5px;transform:scaleX(0.91)">Delete...</div>
<div class="btn" style="top:262px"></div>
<div class="t" style="left:1710.2px;width:120px;text-align:center;top:268.63px;font-size:14.5px;transform:scaleX(0.91)">References</div>
<div class="t" style="left:1856px;top:121.5px;font-size:15px;color:#444;transform-origin:0 0;transform:rotate(90deg) scaleX(0.949)">Pending Changes</div>
<div class="a" style="left:1863px;top:121px;width:7px;height:116px;background:#c2c2c2;"></div>
<div class="t" style="left:14.2px;top:937.70px;font-size:15px;color:#444;transform-origin:0 0;transform:scaleX(1.04);">Output</div>
<div class="a" style="left:14.2px;top:960px;width:47px;height:7px;background:#c0c0c0;"></div>
<div class="t" style="left:76px;top:937.70px;font-size:15px;color:#444;transform-origin:0 0;transform:scaleX(1.0);">Validation</div>
<div class="a" style="left:76px;top:960px;width:65px;height:7px;background:#c0c0c0;"></div>
<div class="t" style="left:156.4px;top:937.70px;font-size:15px;color:#444;transform-origin:0 0;transform:scaleX(0.918);">References</div>
<div class="a" style="left:156.4px;top:960px;width:71px;height:7px;background:#c0c0c0;"></div>
<div class="t" style="left:242.3px;top:937.70px;font-size:15px;color:#444;transform-origin:0 0;transform:scaleX(0.926);">Search</div>
<div class="a" style="left:242.3px;top:960px;width:44px;height:7px;background:#c0c0c0;"></div>
<div class="a" style="left:6px;top:967px;width:1865px;height:1px;background:#d9d9d9;"></div>
<div class="a" style="left:1847px;top:971px;width:1px;height:23px;background:#dcdcdc;"></div>
<svg style="left:1850px;top:976px" width="20" height="20" viewBox="0 0 20 20"><rect x="15.6" y="6" width="2" height="2" fill="#9a9a9a"/><rect x="10.6" y="11" width="2" height="2" fill="#9a9a9a"/><rect x="15.6" y="11" width="2" height="2" fill="#9a9a9a"/><rect x="5.6" y="16" width="2" height="2" fill="#9a9a9a"/><rect x="10.6" y="16" width="2" height="2" fill="#9a9a9a"/><rect x="15.6" y="16" width="2" height="2" fill="#9a9a9a"/></svg>
</body></html>
